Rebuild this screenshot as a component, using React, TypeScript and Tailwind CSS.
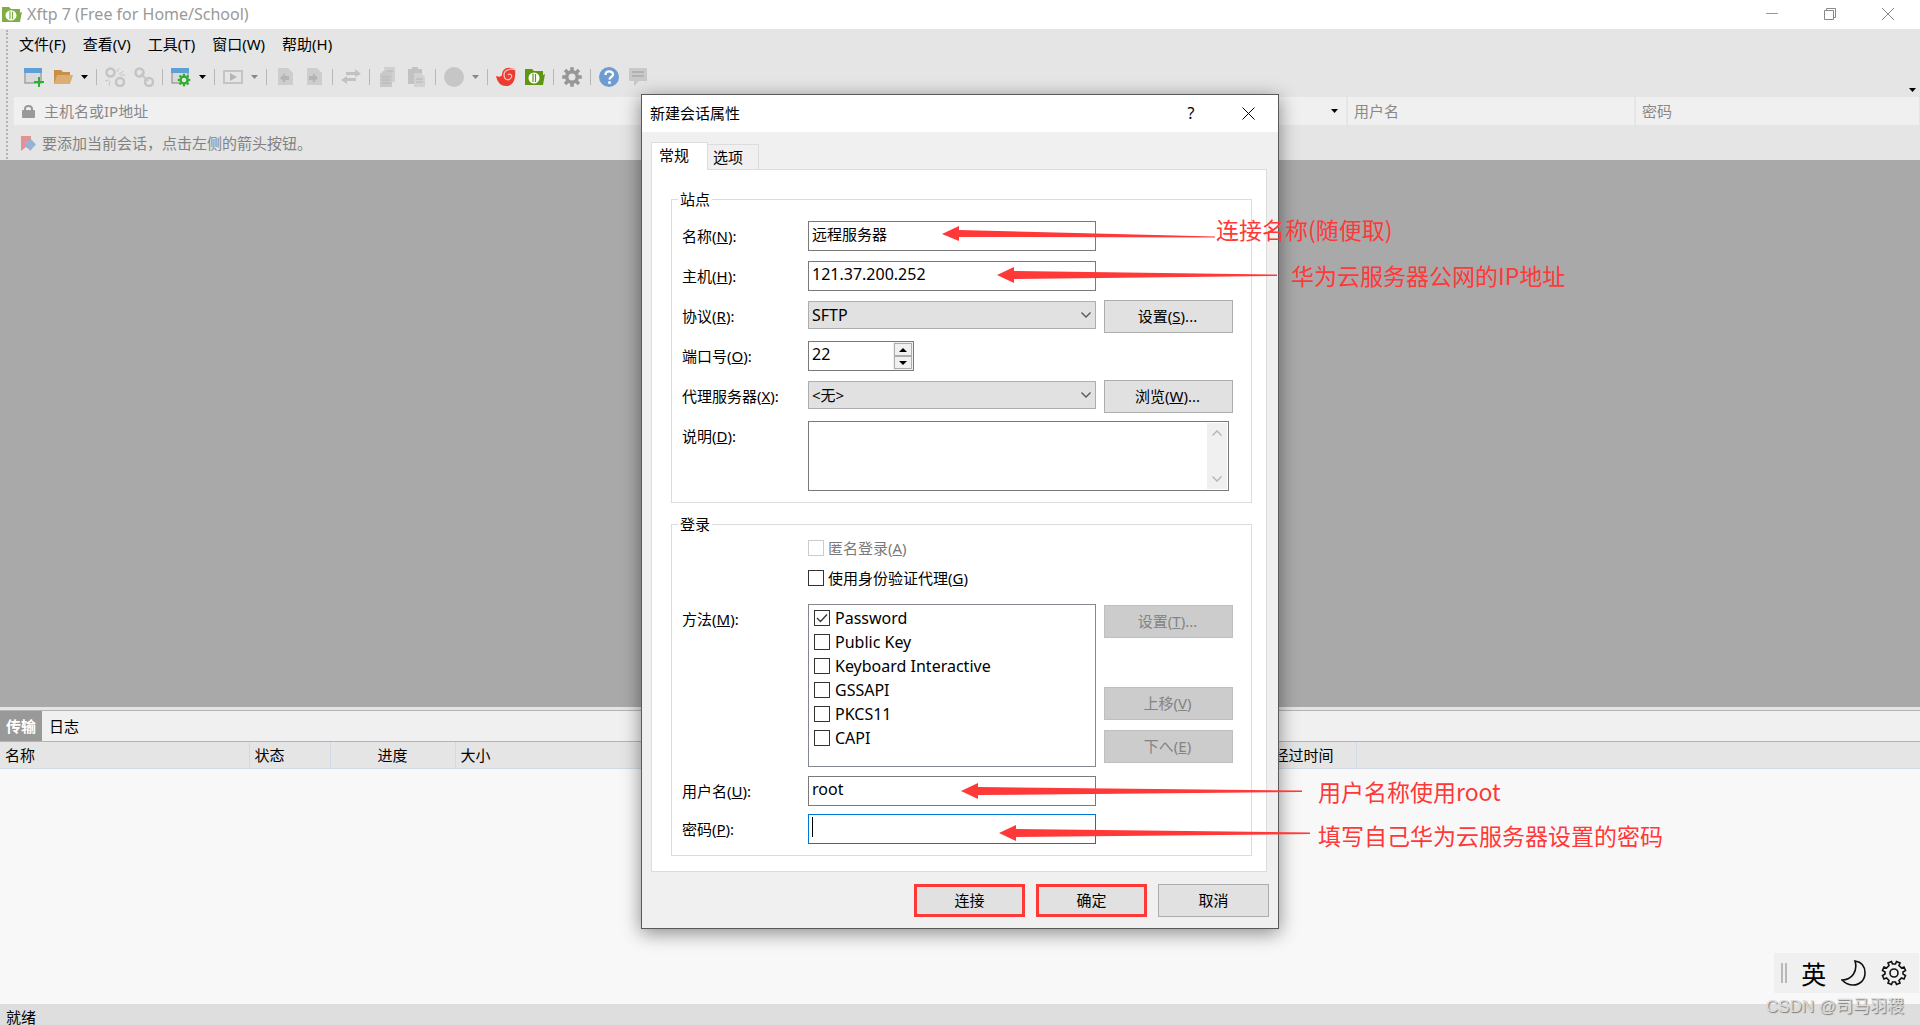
import { useState } from 'react';
import type { ReactNode } from 'react';

const METHODS = ['Password', 'Public Key', 'Keyboard Interactive', 'GSSAPI', 'PKCS11', 'CAPI'];
const MENUS = ['文件(F)', '查看(V)', '工具(T)', '窗口(W)', '帮助(H)'];

export default function App() {
  return (
    <main className="relative min-h-screen flex flex-col bg-[#f8f8f8] text-black text-[15px] leading-5 font-['Noto_Sans','Noto_Sans_CJK_SC',sans-serif] overflow-hidden">
      <TitleBar />

      {/* --- MENU + TOOLBARS --- */}
      <header className="h-[131px] bg-[#e5e5e5] flex">
        <div className="w-[14px] shrink-0 flex justify-center py-px">
          <div className="border-l-2 border-dotted border-[#b4b4b4]" />
        </div>
        <div className="flex-1 min-w-0 flex flex-col">
          <nav className="h-[33px] flex items-center gap-[17px] pl-[5px] pb-1">
            {MENUS.map(m => <button key={m}>{m}</button>)}
          </nav>
          <Toolbar />
          <AddressBar />
          <div className="h-[35px] flex items-center gap-[5px] pl-[6px] pt-px text-[#828282]">
            <svg width="17" height="17" viewBox="0 0 17 17">
              <path d="M1 1h10v15l-5-4-5 4z" fill="#e39191" />
              <path d="M5 6h5V3l6 6.500-6 6.500v-4H5z" fill="#93b4da" />
            </svg>
            <span>要添加当前会话，点击左侧的箭头按钮。</span>
          </div>
        </div>
      </header>

      <section className="h-[547px] bg-[#a9a9a9]" />

      <TransferPane />

      <footer className="bg-[#dedede] pl-[6px] pt-[5px] leading-4">就绪</footer>

      {/* --- DIALOG --- */}
      <div className="absolute inset-x-0 top-[94px] flex justify-center">
        <div className="relative">
          <SessionDialog />
          <Annotations />
        </div>
      </div>

      <ImeBar />
      <div className="absolute right-4 bottom-2 text-[17px] text-[#dcdcdc] [text-shadow:1px_1px_1px_#777] font-['Liberation_Sans','Noto_Sans_CJK_SC',sans-serif]">
        CSDN @司马羽稷
      </div>
    </main>
  );
}

function TitleBar() {
  return (
    <div className="h-[29px] bg-white flex items-center pl-[2px] pb-px text-[#999999]">
      <XftpIcon className="w-5 h-[15px]" main="#7fae45" />
      <h1 className="flex-1 pl-[5px] text-base leading-5">Xftp 7 (Free for Home/School)</h1>
      <div className="flex gap-[46px] pr-[26px]">
        <button aria-label="最小化">
          <svg width="12" height="12" viewBox="0 0 12 12"><path d="M0 5.500h12" stroke="#999" /></svg>
        </button>
        <button aria-label="还原">
          <svg width="12" height="12" viewBox="0 0 12 12" fill="none" stroke="#888"><path d="M.5 2.500h9v9h-9zM2.500 2.500v-2h9v9h-2" /></svg>
        </button>
        <button aria-label="关闭">
          <svg width="12" height="12" viewBox="0 0 12 12" stroke="#888"><path d="M0 0l12 12M12 0L0 12" /></svg>
        </button>
      </div>
    </div>
  );
}

// --- TOOLBAR ---
function Toolbar() {
  return (
    <div className="h-[35px] flex items-center pl-[5px] pb-[5px]">
      <Tool label="新建">
        <WindowGlyph />
        <path d="M15 10v10M10 15h10" stroke="#2fae2f" strokeWidth="2" />
      </Tool>
      <Tool label="打开">
        <path d="M1 3h7l2 2h7v3H5l-3 8H1z" fill="#c98f45" />
        <path d="M4 8h16l-3 9H1z" fill="#dcae74" />
      </Tool>
      <Caret color="#000" />
      <Sep />
      <Tool label="重新连接">
        <Chain />
        <path d="M14 1l-2 4M19 4l-5 3M20 8h-5M4 19l1-5M0 14l4-1" stroke="#c6c6c6" fill="none" />
      </Tool>
      <Tool label="断开">
        <Chain />
        <path d="M7 7l7 7" stroke="#c6c6c6" strokeWidth="2" />
      </Tool>
      <Sep />
      <Tool label="属性">
        <WindowGlyph />
        <Cog cx={13} cy={13} r={4.5} color="#2fae2f" hub="#e5e5e5" />
      </Tool>
      <Caret color="#000" />
      <Sep />
      <Tool label="运行">
        <rect x="1" y="4" width="18" height="12" fill="none" stroke="#c4c4c4" strokeWidth="2" />
        <path d="M7 6l7 4-7 4z" fill="#b5b5b5" />
      </Tool>
      <Caret color="#888" />
      <Sep />
      <Tool label="后退">
        <path d="M3 1h10l5 5v12H3z" fill="#cdcdcd" />
        <path d="M14 9v4h-4v3l-5-5 5-5v3z" fill="#b4b4b4" />
      </Tool>
      <Tool label="前进">
        <path d="M3 1h10l5 5v12H3z" fill="#cdcdcd" />
        <path d="M5 9v4h4v3l5-5-5-5v3z" fill="#b4b4b4" />
      </Tool>
      <Sep />
      <Tool label="传输">
        <path d="M5 5h9V2l6 5-6 3V8H5zM15 14H6v3l-6-4 6-4v2h9z" fill="#c2c2c2" />
      </Tool>
      <Sep />
      <Tool label="复制">
        <path d="M6 0h11v15H6z" fill="#d0d0d0" />
        <path d="M5 4l-3 3v13h12V4z" fill="#c9c9c9" />
        <path d="M4 10h8M4 13h8M4 16h8M9 4h6" stroke="#b6b6b6" />
      </Tool>
      <Tool label="粘贴">
        <path d="M1 2h4V0h6v2h4v15H1z" fill="#c2c2c2" />
        <path d="M7 6h7l4 4v10H7z" fill="#d2d2d2" />
        <path d="M9 12h7M9 15h7" stroke="#b6b6b6" />
      </Tool>
      <Sep />
      <Tool label="同步"><circle cx="10" cy="10" r="10" fill="#c6c6c6" /></Tool>
      <Caret color="#888" />
      <Sep />
      <Tool label="Xshell">
        <path d="M0 9c3 1 5 1 6-1 0-5 4-8 8-7l5 1c1 9-1 17-9 17C4 19 1 14 0 9z" fill="#ee3a30" />
        <path d="M20 3c-6-2-12 0-12 5s5 6 7 3-1-5-3-3" fill="none" stroke="#f3c4c0" strokeWidth="1.300" />
      </Tool>
      <button aria-label="Xftp" className="w-[29px] flex justify-center">
        <XftpIcon className="w-5 h-4" main="#5f9610" />
      </button>
      <Sep />
      <Tool label="选项"><Cog cx={10} cy={10} r={7} color="#979797" hub="#e5e5e5" /></Tool>
      <Sep />
      <Tool label="帮助">
        <circle cx="10" cy="10" r="10" fill="#6d9cd1" />
        <path d="M6.500 8c0-5 7.500-4.500 7.500-.5 0 2.500-3.500 2.500-3.500 5" stroke="#fff" strokeWidth="2.300" fill="none" />
        <circle cx="10.500" cy="15.500" r="1.500" fill="#fff" />
      </Tool>
      <Tool label="反馈">
        <path d="M1 1h18v13h-8l-5 5v-5H1z" fill="#c9c9c9" />
        <path d="M4 5h12M4 9h12" stroke="#b2b2b2" strokeWidth="2" />
      </Tool>
      <div className="flex-1 self-end flex justify-end">
        <Caret color="#000" />
      </div>
    </div>
  );
}

function Tool({ label, children }: { label: string, children: ReactNode }) {
  return (
    <button aria-label={label} className="w-[29px] flex justify-center">
      <svg width="20" height="20" viewBox="0 0 20 20">{children}</svg>
    </button>
  );
}

function Caret({ color }: { color: string }) {
  return (
    <div className="w-[15px] flex justify-center">
      <svg width="7" height="4" viewBox="0 0 7 4"><path d="M0 0h7L3.500 4z" fill={color} /></svg>
    </div>
  );
}

function Sep() {
  return <div className="w-2 flex justify-center"><div className="w-px h-4 bg-[#b8b8b8]" /></div>;
}

function WindowGlyph() {
  return (
    <>
      <rect x="1" y="2" width="16" height="14" fill="#dadada" stroke="#a2a2a2" strokeWidth="1.500" />
      <rect x="0" y="1" width="18" height="5" fill="#5f9fd8" />
    </>
  );
}

function Chain() {
  return (
    <g fill="none" stroke="#c4c4c4" strokeWidth="2.500">
      <circle cx="5.500" cy="5.500" r="4" />
      <circle cx="15" cy="15" r="4" />
    </g>
  );
}

function Cog({ cx, cy, r, color, hub }: { cx: number, cy: number, r: number, color: string, hub: string }) {
  return (
    <g>
      {[0, 45, 90, 135].map(a => (
        <rect key={a} x={cx - r / 4} y={cy - r * 1.4} width={r / 2} height={r * 2.8} fill={color} transform={`rotate(${a} ${cx} ${cy})`} />
      ))}
      <circle cx={cx} cy={cy} r={r} fill={color} />
      <circle cx={cx} cy={cy} r={r / 2} fill={hub} />
    </g>
  );
}

function XftpIcon({ className, main }: { className: string, main: string }) {
  return (
    <svg className={className} viewBox="0 0 20 16" preserveAspectRatio="none">
      <path d="M0 0h7l2 2h9v4l2-1-2 11H0z" fill={main} />
      <circle cx="9" cy="9" r="5.500" fill="#fff" />
      <path d="M8 4.500v5.500M8 13v-3M10.500 5v8" stroke={main} strokeWidth="1.200" fill="none" />
    </svg>
  );
}

function AddressBar() {
  const field = "h-7 bg-[#f0f0f0] outline-none placeholder:text-[#888888] px-[6px]";
  return (
    <div className="flex gap-[2px] pr-px">
      <div className="w-[1332px] shrink h-7 bg-[#f0f0f0] flex items-center pl-2">
        <svg width="13" height="13" viewBox="0 0 13 13">
          <path d="M3 6V4q0-3 3.500-3T10 4v2" fill="none" stroke="#999" strokeWidth="2" />
          <rect x="0" y="5" width="13" height="8" rx="1" fill="#999" />
        </svg>
        <input aria-label="主机名或IP地址" placeholder="主机名或IP地址" className="flex-1 min-w-0 bg-transparent outline-none pl-[9px] placeholder:text-[#888888]" />
        <div className="pr-1"><Caret color="#000" /></div>
      </div>
      <input aria-label="用户名" placeholder="用户名" className={`${field} w-[286px]`} />
      <input aria-label="密码" type="password" placeholder="密码" className={`${field} flex-1 min-w-0`} />
    </div>
  );
}

// --- TRANSFER LIST ---
function TransferPane() {
  const th = "font-normal border-r border-[#d0dae6]";
  return (
    <section className="flex-1 border-t-[3px] border-[#e5e5e5]">
      <div className="h-8 flex bg-[#f0f0f0] border-y border-[#b4b4b4]">
        <button className="w-[42px] pb-px bg-[#999999] text-white font-bold">传输</button>
        <button className="px-[7px] pb-px">日志</button>
      </div>
      <table className="w-full table-fixed border-collapse">
        <thead>
          <tr className="h-[26px] bg-[#e5e5e5] border-b border-[#d0dae6]">
            <th className={`${th} w-[249px] text-left pl-[5px]`}>名称</th>
            <th className={`${th} w-[81px] text-left pl-[5px]`}>状态</th>
            <th className={`${th} w-[125px]`}>进度</th>
            <th className={`${th} w-[813px] text-left pl-[5px]`}>大小</th>
            <th className={`${th} w-[88px] text-left pl-[5px]`}>经过时间</th>
            <th />
          </tr>
        </thead>
      </table>
    </section>
  );
}

// --- SESSION DIALOG ---
function SessionDialog() {
  const [methods, setMethods] = useState<string[]>(['Password']);

  const toggle = (name: string) => {
    setMethods(methods.includes(name) ? methods.filter(m => m !== name) : [...methods, name]);
  };

  const input = "w-[288px] h-[30px] bg-white border border-[#7a7a7a] px-[3px] outline-none";

  return (
    <div role="dialog" aria-label="新建会话属性" className="w-[638px] bg-[#f0f0f0] border border-[#5a5a5a] shadow-[0_4px_18px_rgba(0,0,0,0.45)]">
      <div className="h-[37px] bg-white flex items-center pl-[8px] pr-[23px] pb-px">
        <h2 className="flex-1">新建会话属性</h2>
        <button className="w-[10px] mr-[46px] text-base leading-5">?</button>
        <button aria-label="关闭">
          <svg width="13" height="13" viewBox="0 0 13 13" stroke="#000"><path d="M.5 .5l12 12M12.500 .5l-12 12" /></svg>
        </button>
      </div>

      <div className="px-[9px] pt-[10px]">
        <div className="flex items-end">
          <button className="relative w-[57px] h-7 -mb-px pl-[7px] pb-[3px] text-left bg-white border border-b-0 border-[#dcdcdc]">常规</button>
          <button className="w-[51px] h-[25px] pl-[5px] text-left border border-l-0 border-b-0 border-[#dcdcdc]">选项</button>
        </div>

        <div className="w-[616px] bg-white border border-[#dcdcdc] pl-[19px] pr-[14px] pt-[29px] pb-[15px]">
          <Group title="站点" className="h-[304px] pt-[21px]">
            <div className="flex flex-col gap-[10px]">
              <Row id="name" text="名称" hotkey="N">
                <input id="name" className={`${input} pb-[6px]`} defaultValue="远程服务器" />
              </Row>
              <Row id="host" text="主机" hotkey="H">
                <input id="host" className={`${input} pb-1 text-base`} defaultValue="121.37.200.252" />
              </Row>
              <Row id="protocol" text="协议" hotkey="R">
                <Select id="protocol" value="SFTP" latin />
                <SideButton text="设置" hotkey="S" dots />
              </Row>
              <Row id="port" text="端口号" hotkey="O">
                <div className="flex w-[106px] h-[30px] border border-[#7a7a7a]">
                  <input id="port" className="w-[84px] pl-[3px] pb-1 text-base outline-none" defaultValue="22" />
                  <div className="w-5 bg-[#f0f0f0] p-px flex flex-col">
                    <button aria-label="增加" className="flex-1 flex items-center justify-center border border-[#adadad]">
                      <svg width="8" height="4" viewBox="0 0 8 4"><path d="M0 4h8L4 0z" /></svg>
                    </button>
                    <button aria-label="减少" className="flex-1 flex items-center justify-center border border-[#adadad]">
                      <svg width="8" height="4" viewBox="0 0 8 4"><path d="M0 0h8L4 4z" /></svg>
                    </button>
                  </div>
                </div>
              </Row>
              <Row id="proxy" text="代理服务器" hotkey="X">
                <Select id="proxy" value="<无>" />
                <SideButton text="浏览" hotkey="W" dots />
              </Row>
              <Row id="desc" text="说明" hotkey="D">
                <div className="w-[421px] h-[70px] flex border border-[#7a7a7a] p-px">
                  <textarea id="desc" className="flex-1 resize-none outline-none" />
                  <div className="w-5 bg-[#f0f0f0] flex flex-col items-center justify-between py-[7px]">
                    <Chevron up color="#b4b4b4" />
                    <Chevron color="#b4b4b4" />
                  </div>
                </div>
              </Row>
            </div>
          </Group>

          <Group title="登录" className="h-[332px] mt-[21px] pt-[8px]">
            <div className="pl-[136px] flex flex-col">
              <label className="h-[30px] flex items-center gap-1 text-[#7a7a7a]">
                <Check disabled />
                <span>匿名登录(<u>A</u>)</span>
              </label>
              <label className="h-[30px] flex items-center gap-1">
                <Check />
                <span>使用身份验证代理(<u>G</u>)</span>
              </label>
            </div>
            <div className="flex items-start mt-[11px]">
              <span className="w-[126px] ml-[10px] pt-[5px]">方法(<u>M</u>):</span>
              <div className="w-[288px] h-[163px] border border-[#828790] pt-px pl-[5px]">
                {METHODS.map(name => (
                  <label key={name} className="h-6 flex items-center gap-[5px] text-base leading-5">
                    <Check checked={methods.includes(name)} onChange={() => toggle(name)} />
                    <span>{name}</span>
                  </label>
                ))}
              </div>
              <div className="flex flex-col pt-[2px]">
                <SideButton text="设置" hotkey="T" dots disabled />
                <div className="h-[50px]" />
                <SideButton text="上移" hotkey="V" disabled />
                <div className="h-[11px]" />
                <SideButton text="下へ" hotkey="E" disabled />
              </div>
            </div>
            <div className="flex flex-col gap-2 mt-[9px]">
              <Row id="user" text="用户名" hotkey="U">
                <input id="user" className={`${input} pb-1 text-base`} defaultValue="root" />
              </Row>
              <Row id="pass" text="密码" hotkey="P">
                <div className="w-[288px] h-[30px] border border-[#0078d7] flex items-start pl-[3px] pt-[2px]">
                  <div className="w-px h-5 bg-black" />
                  <input id="pass" type="password" className="flex-1 h-5 outline-none" />
                </div>
              </Row>
            </div>
          </Group>
        </div>
      </div>

      <div className="flex justify-end gap-[11px] pt-3 pr-[9px] pb-[11px]">
        <FootButton text="连接" marked />
        <FootButton text="确定" marked />
        <FootButton text="取消" />
      </div>
    </div>
  );
}

function Group({ title, className, children }: { title: string, className: string, children: ReactNode }) {
  return (
    <section className={`relative border border-[#dcdcdc] ${className}`}>
      <h3 className="absolute left-[6px] -top-[11px] bg-white px-[2px]">{title}</h3>
      {children}
    </section>
  );
}

function Row({ id, text, hotkey, children }: { id: string, text: string, hotkey: string, children: ReactNode }) {
  return (
    <div className="flex items-start h-[30px]">
      <label htmlFor={id} className="w-[126px] ml-[10px] pt-[5px]">{text}(<u>{hotkey}</u>):</label>
      {children}
    </div>
  );
}

function Select({ id, value, latin }: { id: string, value: string, latin?: boolean }) {
  return (
    <div className="relative w-[288px]">
      <select id={id} className={`w-full h-7 appearance-none bg-[#e1e1e1] border border-[#adadad] pl-[3px] outline-none ${latin ? 'text-base' : ''}`}>
        <option>{value}</option>
      </select>
      <div className="absolute right-[5px] top-[11px] pointer-events-none"><Chevron color="#555" /></div>
    </div>
  );
}

function Chevron({ up, color }: { up?: boolean, color: string }) {
  return (
    <svg width="10" height="6" viewBox="0 0 10 6" fill="none" stroke={color} strokeWidth="1.300">
      <path d={up ? 'M.5 5.500L5 1l4.500 4.500' : 'M.5 .5L5 5 9.500 .5'} />
    </svg>
  );
}

function SideButton({ text, hotkey, dots, disabled }: { text: string, hotkey: string, dots?: boolean, disabled?: boolean }) {
  return (
    <button
      disabled={disabled}
      className={`w-[129px] h-[33px] ml-2 -mt-px pb-[2px] pr-[2px] border ${disabled ? 'bg-[#cccccc] border-[#bfbfbf] text-[#838383]' : 'bg-[#e1e1e1] border-[#adadad]'}`}
    >
      {text}(<u>{hotkey}</u>){dots && '...'}
    </button>
  );
}

function FootButton({ text, marked }: { text: string, marked?: boolean }) {
  return (
    <button className={`w-[111px] h-[33px] pb-[2px] bg-[#e1e1e1] border border-[#adadad] ${marked ? 'outline-3 -outline-offset-3 outline-[#ff3838]' : ''}`}>
      {text}
    </button>
  );
}

function Check({ checked, disabled, onChange }: { checked?: boolean, disabled?: boolean, onChange?: () => void }) {
  return (
    <span className="relative w-4 h-4 flex">
      <input
        type="checkbox"
        defaultChecked={checked}
        onChange={onChange}
        disabled={disabled}
        className="peer w-4 h-4 appearance-none bg-white border border-[#333333] disabled:border-[#cccccc]"
      />
      <svg className="absolute inset-0 hidden peer-checked:block pointer-events-none" width="16" height="16" viewBox="0 0 16 16">
        <path d="M3 8l3.500 3.500L13 4.500" fill="none" stroke="#333" strokeWidth="1.300" />
      </svg>
    </span>
  );
}

// --- RED NOTES OVER THE DIALOG ---
function Annotations() {
  return (
    <div className="absolute left-0 top-0 pointer-events-none text-[23px] leading-7 text-[#ff3838] whitespace-nowrap font-['Noto_Sans_CJK_SC',sans-serif]">
      <svg className="absolute left-0 top-0" width="680" height="760" viewBox="0 0 680 760" fill="#ff3838">
        <path d="M301 140l17-8v4l256 6.500v1l-256-.500v4z" />
        <path d="M356 181l17-8v4l263 3.500v1.500l-263 3v4z" />
        <path d="M320 697l17-8v4l324 3.500v1.500l-324 3v4z" />
        <path d="M358 739l17-8v4l294 3.500v1.500l-294 3v4z" />
      </svg>
      <span className="absolute left-[575px] top-[121px]">连接名称(随便取)</span>
      <span className="absolute left-[650px] top-[167px]">华为云服务器公网的IP地址</span>
      <span className="absolute left-[677px] top-[683px]">用户名称使用root</span>
      <span className="absolute left-[677px] top-[727px]">填写自己华为云服务器设置的密码</span>
    </div>
  );
}

function ImeBar() {
  return (
    <div className="absolute right-px bottom-8 w-[145px] h-10 bg-[#f0f0f0] flex items-center pl-[7px] pr-3 justify-between">
      <div className="w-[6px] h-5 border-x-2 border-[#b8b8b8]" />
      <span className="text-[25px] leading-8 font-['Noto_Sans_CJK_SC',sans-serif]">英</span>
      <svg width="26" height="26" viewBox="0 0 26 26" fill="none" stroke="#111" strokeWidth="1.600">
        <path d="M14 1c7 1 10 6 10 12 0 7-5 12-12 12-4 0-8-2-11-5C11 20 17 11 14 1z" />
      </svg>
      <svg width="26" height="26" viewBox="0 0 26 26" fill="none" stroke="#111" strokeWidth="1.600">
        <circle cx="13" cy="13" r="4" />
        <path d="M10.500 1.500l1 2.500h3l1-2.500 3.500 1.500-1 2.500 2.500 2.500 2.500-1 1.500 3.500-2.500 1.500v2l2.500 1.500-1.500 3.500-2.500-1-2.500 2.500 1 2.500-3.500 1.500-1-2.500h-3l-1 2.500-3.500-1.500 1-2.500-2.500-2.500-2.500 1-1.500-3.500 2.500-1.500v-2L1.500 10.500 3 7l2.500 1L8 5.500 7 3z" />
      </svg>
    </div>
  );
}
